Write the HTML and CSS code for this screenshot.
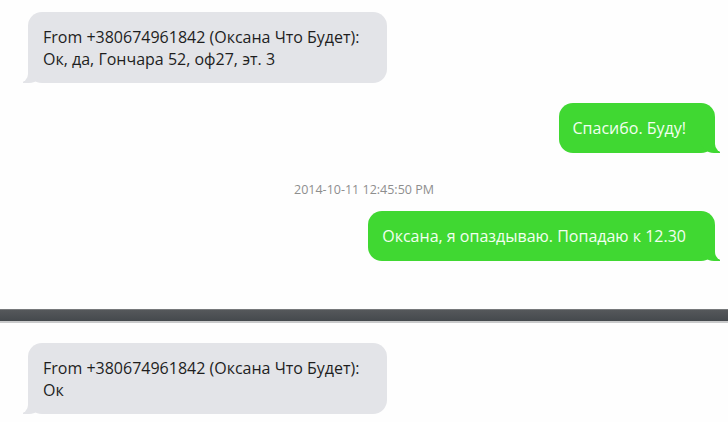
FILE: index.html
```html
<!DOCTYPE html>
<html>
<head>
<meta charset="utf-8">
<link rel="stylesheet" href="styles.css">
</head>
<body>
<div class="thread thread-top">
  <div class="row row-in">
    <div class="bubble bubble-in">From +380674961842 (Оксана Что Будет):<br>Ок, да, Гончара 52, оф27, эт. 3</div>
  </div>
  <div class="row row-out first-out">
    <div class="bubble bubble-out">Спасибо. Буду!</div>
  </div>
  <div class="stamp">2014-10-11 12:45:50 PM</div>
  <div class="row row-out">
    <div class="bubble bubble-out">Оксана, я опаздываю. Попадаю к 12.30</div>
  </div>
</div>
<div class="divider"></div>
<div class="thread thread-bottom">
  <div class="row row-in">
    <div class="bubble bubble-in">From +380674961842 (Оксана Что Будет):<br>Ок</div>
  </div>
</div>
</body>
</html>
```
FILE: styles.css
```css
html, body {
  margin: 0;
  padding: 0;
  background: #fefefe;
}
body {
  width: 728px;
  height: 422px;
  overflow: hidden;
  font-family: "Open Sans", "Noto Sans", sans-serif;
  font-size: 16px;
  color: #222;
}
.thread {
  display: flex;
  flex-direction: column;
}
.thread-top {
  padding-top: 12px;
  height: 309px;
  box-sizing: border-box;
}
.thread-bottom {
  padding-top: 20px;
}
.row {
  display: flex;
}
.row-in {
  justify-content: flex-start;
  padding-left: 28px;
}
.row-out {
  justify-content: flex-end;
  padding-right: 13px;
}
.first-out {
  margin-top: 20px;
}
.bubble {
  position: relative;
  border-radius: 14px;
  line-height: 22px;
}
.bubble-in {
  background: #e3e4e8;
  color: #1e1e1e;
  padding: 14px 28px 13px 15px;
}
.bubble-out {
  background: #40d832;
  color: #f2fff0;
  padding: 14px 29px 14px 14px;
}
.bubble-in::before {
  content: "";
  position: absolute;
  bottom: 0;
  left: -5px;
  width: 20px;
  height: 18px;
  background: #e3e4e8;
  border-bottom-right-radius: 14px;
}
.bubble-in::after {
  content: "";
  position: absolute;
  bottom: 0;
  left: -10px;
  width: 10px;
  height: 20px;
  background: #fefefe;
  border-bottom-right-radius: 9px;
}
.bubble-out::before {
  content: "";
  position: absolute;
  bottom: 0;
  right: -5px;
  width: 20px;
  height: 18px;
  background: #40d832;
  border-bottom-left-radius: 14px;
}
.bubble-out::after {
  content: "";
  position: absolute;
  bottom: 0;
  right: -10px;
  width: 10px;
  height: 20px;
  background: #fefefe;
  border-bottom-left-radius: 9px;
}
.stamp {
  text-align: center;
  font-size: 12.5px;
  color: #8e8e8e;
  line-height: 14px;
  margin: 30px 0 14px;
}
.divider {
  height: 14px;
  background: linear-gradient(#55585b, #45494d);
  border-top: 1px solid #77797b;
  border-bottom: 2px solid #c9cacb;
  box-sizing: border-box;
}
```
